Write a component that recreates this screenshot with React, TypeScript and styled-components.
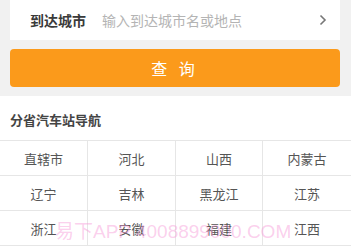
import React from 'react';
import styled, { createGlobalStyle } from 'styled-components';

const GlobalStyle = createGlobalStyle`
    html, body {
        margin: 0;
        padding: 0;
        background: #fff;
        font-family: "Noto Sans CJK SC", "Noto Sans", sans-serif;
    }
`

const provinces = [
    '直辖市', '河北', '山西', '内蒙古',
    '辽宁', '吉林', '黑龙江', '江苏',
    '浙江', '安徽', '福建', '江西',
]

export default function App() {
    return (
        <>
            <GlobalStyle />
            <Page>
                <SearchArea>
                    <CityInput>
                        <CityLabel>到达城市</CityLabel>
                        <Placeholder>输入到达城市名或地点</Placeholder>
                        <Chevron viewBox="0 0 10 14">
                            <path d="M2.5 2.5 L7 7 L2.5 11.5" />
                        </Chevron>
                    </CityInput>
                    <SearchButton>查 询</SearchButton>
                </SearchArea>
                <NavSection>
                    <NavTitle>分省汽车站导航</NavTitle>
                    <Grid>
                        {provinces.map((p, i) => (
                            <Cell key={i} $lastCol={i % 4 === 3}>{p}</Cell>
                        ))}
                    </Grid>
                    <Watermark>易下APP 4008899000.COM</Watermark>
                </NavSection>
            </Page>
        </>
    )
}

const Page = styled.div`
    width: 351px;
    height: 251px;
    overflow: hidden;
    background: #fff;
`

const SearchArea = styled.div`
    background: #f1f1f1;
    padding: 0 11px 9px 10px;
    display: flex;
    flex-direction: column;
    gap: 9px;
`

const CityInput = styled.div`
    height: 40px;
    background: #fff;
    display: flex;
    align-items: center;
    padding: 0 12px 0 20px;
`

const CityLabel = styled.span`
    font-size: 14px;
    font-weight: 700;
    color: #3a3a3a;
    width: 72px;
`

const Placeholder = styled.span`
    font-size: 14px;
    color: #b4b4b4;
    flex: 1;
`

const Chevron = styled.svg`
    width: 10px;
    height: 14px;
    fill: none;
    stroke: #777;
    stroke-width: 1.6;
`

const SearchButton = styled.div`
    height: 38px;
    border-radius: 4px;
    background: #fb9a1b;
    color: #fff;
    font-size: 16px;
    letter-spacing: 4px;
    display: flex;
    align-items: center;
    justify-content: center;
`

const NavSection = styled.div`
    position: relative;
`

const NavTitle = styled.div`
    padding: 14px 0 0 10px;
    height: 30px;
    font-size: 13px;
    font-weight: 700;
    color: #444;
`

const Grid = styled.div`
    display: grid;
    grid-template-columns: 88px 88px 87px 88px;
    grid-auto-rows: 35px;
    border-top: 1px solid #e6e6e6;
`

const Cell = styled.div<{ $lastCol: boolean }>`
    display: flex;
    align-items: center;
    justify-content: center;
    font-size: 13px;
    color: #555;
    border-bottom: 1px solid #e6e6e6;
    border-right: ${p => p.$lastCol ? 'none' : '1px solid #e6e6e6'};
`

const Watermark = styled.div`
    position: absolute;
    left: 55px;
    top: 120px;
    font-family: "Liberation Sans", "Noto Sans CJK SC", sans-serif;
    font-size: 19px;
    color: rgba(246, 150, 214, 0.45);
    white-space: nowrap;
    pointer-events: none;
`
